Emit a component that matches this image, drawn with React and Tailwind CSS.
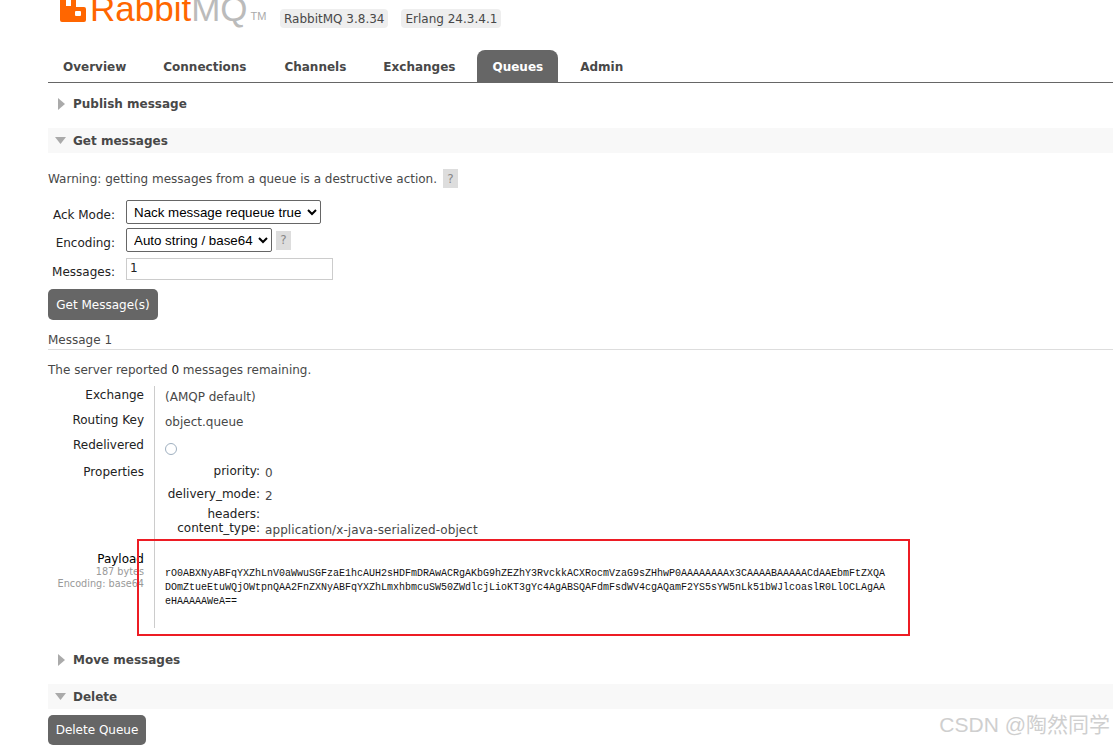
const ff = { fontFamily: '"DejaVu Sans", Verdana, sans-serif' };
const arial = { fontFamily: '"Liberation Sans", sans-serif' };

function Tri({ open }) {
  return open ? (
    <svg width="11" height="7" viewBox="0 0 11 7" className="shrink-0 ml-[7px] mr-[7px]"><path d="M0 0H11L5.5 7Z" fill="#aaaaaa" /></svg>
  ) : (
    <svg width="7" height="12" viewBox="0 0 7 12" className="shrink-0 ml-[10px] mr-[8px]"><path d="M0 0L7 6L0 12Z" fill="#aaaaaa" /></svg>
  );
}

function Section({ open, title, className = "" }) {
  return (
    <div className={"flex items-center h-[25px] font-bold text-[12px] text-[#484848] " + (open ? "bg-[#f8f8f8] " : "") + className}>
      <Tri open={open} />
      <span>{title}</span>
    </div>
  );
}

function Help({ className = "" }) {
  return <span className={"inline-flex items-center justify-center w-[15px] h-[19px] bg-[#dddddd] text-[#888888] text-[12px] " + className}>?</span>;
}

function Row({ label, children, className = "" }) {
  return (
    <div className={"flex items-stretch " + className}>
      <div className="w-[96px] text-right text-[12px] text-[#222222] shrink-0">{label}</div>
      <div className="ml-[10px] border-l border-[#cccccc] pl-[10px] text-[12px] text-[#484848] grow">{children}</div>
    </div>
  );
}

function Prop({ k, v, className = "" }) {
  return (
    <div className={"flex " + className}>
      <div className="w-[95px] text-right text-[#222222]">{k}</div>
      <div className="ml-[5px] translate-y-[2px] tracking-[0.08px]">{v}</div>
    </div>
  );
}

export default function App() {
  return (
    <div className="relative w-[1113px] h-[745px] overflow-hidden bg-white" style={ff}>
      <header className="h-[50px] flex items-start pl-[60px]">
        <div className="flex items-end h-[22px] w-[220px] shrink-0">
          <svg width="26" height="22" viewBox="0 0 26 22" className="shrink-0">
            <path d="M0 0H6V6H11V0H16V7H24Q26 7 26 9V20Q26 22 24 22H2Q0 22 0 20Z" fill="#ff6600" />
            <rect x="15" y="11" width="6" height="5" rx="1" fill="#ffffff" />
          </svg>
          <span className="ml-[4px] mb-[2px] text-[35px] leading-[22px] h-[22px] flex items-end font-light whitespace-nowrap" style={arial}>
            <span className="text-[#ff6600]">Rabbit</span>
            <span className="text-[#bbbbbb]">MQ</span>
          </span>
          <span className="ml-[3px] text-[11px] leading-none text-[#aaaaaa]" style={arial}>TM</span>
        </div>
        <span className="mt-[9px] h-[19px] px-[4px] bg-[#eeeeee] rounded-[4px] text-[12px] text-[#484848] flex items-center">RabbitMQ 3.8.34</span>
        <span className="ml-[13px] mt-[9px] h-[19px] px-[4px] bg-[#eeeeee] rounded-[4px] text-[12px] text-[#484848] flex items-center">Erlang 24.3.4.1</span>
      </header>

      <main className="ml-[48px]">
        <nav className="flex items-stretch h-[33px] border-b border-[#666666] font-bold text-[12px] text-[#484848]">
          <span className="px-[15px] pt-[1px] flex items-center">Overview</span>
          <span className="ml-[7px] px-[15px] pt-[1px] flex items-center">Connections</span>
          <span className="ml-[8px] px-[15px] pt-[1px] flex items-center">Channels</span>
          <span className="ml-[7px] px-[15px] pt-[1px] flex items-center">Exchanges</span>
          <span className="ml-[7px] px-[15px] pt-[1px] flex items-center bg-[#666666] text-white rounded-t-[8px]">Queues</span>
          <span className="ml-[7px] px-[15px] pt-[1px] flex items-center">Admin</span>
        </nav>

        <Section title="Publish message" className="mt-[8px]" />
        <Section open title="Get messages" className="mt-[12px]" />

        <p className="mt-[16px] h-[19px] flex items-center text-[12px] text-[#484848]">
          Warning: getting messages from a queue is a destructive action.
          <Help className="ml-[6px]" />
        </p>

        <div className="mt-[12px] flex flex-col">
          <div className="flex items-center h-[24px]">
            <label className="w-[67px] pt-[5px] text-right text-[12px] text-[#222222]">Ack Mode:</label>
            <select className="ml-[11px] w-[195px] h-[24px] pl-[3px] border border-[#666666] rounded-[2px] bg-white text-[13.33px] text-black" style={arial} defaultValue="a">
              <option value="a">Nack message requeue true</option>
            </select>
          </div>
          <div className="flex items-center h-[24px] mt-[4px]">
            <label className="w-[67px] pt-[5px] text-right text-[12px] text-[#222222]">Encoding:</label>
            <select className="ml-[11px] w-[146px] h-[24px] pl-[3px] border border-[#666666] rounded-[2px] bg-white text-[13.33px] text-black" style={arial} defaultValue="a">
              <option value="a">Auto string / base64</option>
            </select>
            <Help className="ml-[4px]" />
          </div>
          <div className="flex items-center h-[22px] mt-[6px]">
            <label className="w-[67px] pt-[6px] text-right text-[12px] text-[#222222]">Messages:</label>
            <input readOnly value="1" className="ml-[11px] w-[207px] h-[22px] px-[3px] pb-[2px] border border-[#cccccc] text-[12px] text-[#222222] outline-none" />
          </div>
        </div>

        <button className="mt-[9px] block w-[110px] h-[31px] bg-[#666666] text-white text-[12px] rounded-[5px]">Get Message(s)</button>

        <div className="mt-[10px] h-[20px] border-b border-[#dddddd] text-[12px] text-[#484848] leading-[20px]">Message 1</div>
        <p className="mt-[10px] h-[20px] text-[12px] text-[#484848] leading-[20px]">
          The server reported <span className="text-[#222222] font-medium">0</span> messages remaining.
        </p>

        <div className="mt-[6px]">
          <Row label="Exchange" className="h-[25px]"><span className="inline-block pt-[2px]">(AMQP default)</span></Row>
          <Row label="Routing Key" className="h-[25px]"><span className="inline-block pt-[2px]">object.queue</span></Row>
          <Row label="Redelivered" className="h-[27px]">
            <span className="block mt-[7px] w-[12px] h-[12px] rounded-full border border-[#9fb0c0]" />
          </Row>
          <Row label="Properties" className="h-[76px]">
            <div className="-mt-[1px]">
              <Prop k="priority:" v="0" className="h-[23px]" />
              <Prop k="delivery_mode:" v="2" className="h-[20px]" />
              <Prop k="headers:" v="" className="h-[14px]" />
              <Prop k="content_type:" v="application/x-java-serialized-object" className="h-[15px]" />
            </div>
          </Row>
          <Row
            label={
              <div className="pt-[13px]">
                <div className="text-[12px] text-black leading-[14px]">Payload</div>
                <div className="text-[9.7px] text-[#999999] leading-[12px]">187 bytes</div>
                <div className="text-[9.7px] text-[#999999] leading-[12px]">Encoding: base64</div>
              </div>
            }
            className="h-[89px]"
          >
            <pre className="pt-[28px] text-[10px] leading-[14px] text-[#111111]" style={{ fontFamily: '"Liberation Mono", monospace' }}>
              {"rO0ABXNyABFqYXZhLnV0aWwuSGFzaE1hcAUH2sHDFmDRAwACRgAKbG9hZEZhY3RvckkACXRocmVzaG9sZHhwP0AAAAAAAAx3CAAAABAAAAACdAAEbmFtZXQA\nDOmZtueEtuWQjOWtpnQAA2FnZXNyABFqYXZhLmxhbmcuSW50ZWdlcjLioKT3gYc4AgABSQAFdmFsdWV4cgAQamF2YS5sYW5nLk51bWJlcoaslR0LlOCLAgAA\neHAAAAAWeA=="}
            </pre>
          </Row>
        </div>

        <Section title="Move messages" className="mt-[19px]" />
        <Section open title="Delete" className="mt-[12px]" />
        <button className="mt-[6px] block w-[98px] h-[30px] bg-[#666666] text-white text-[12px] rounded-[5px]">Delete Queue</button>
      </main>

      <div className="absolute left-[137px] top-[539px] w-[773px] h-[97px] border-2 border-[#ed1c24]" />
      <div className="absolute right-[3px] top-[711px] text-[21px] leading-[28px] text-[#cfcfcf] whitespace-nowrap" style={{ fontFamily: '"Liberation Sans", "Noto Sans CJK SC", sans-serif' }}>CSDN @陶然同学</div>
    </div>
  );
}
